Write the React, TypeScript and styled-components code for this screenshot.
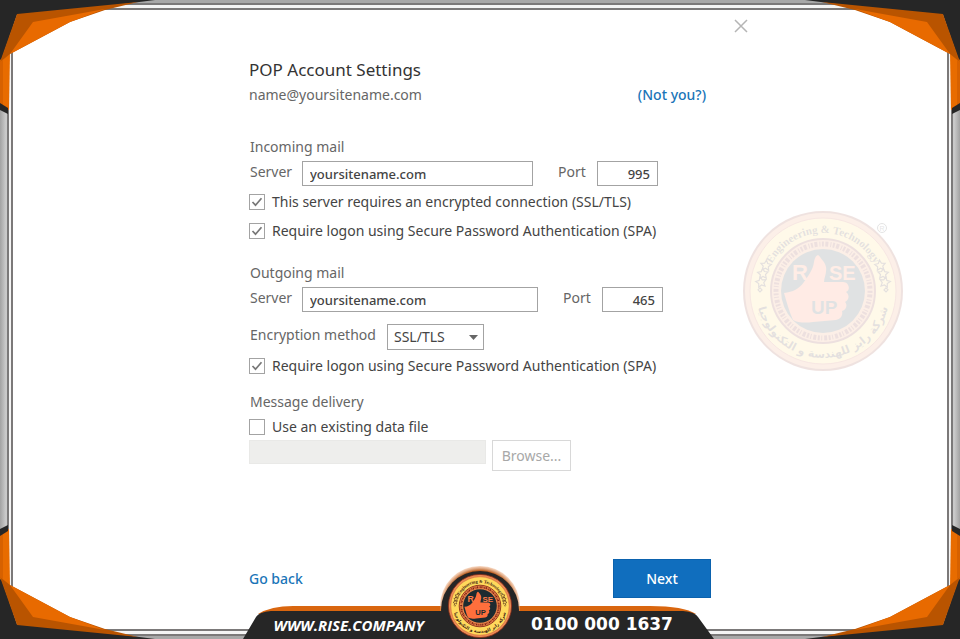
import React, { useId } from "react";
import styled, { createGlobalStyle, css } from "styled-components";

const GlobalStyle = createGlobalStyle`
  *, *::before, *::after { box-sizing: border-box; }
  body {
    margin: 0;
    background: #ffffff;
    font-family: "Noto Sans", "Open Sans", sans-serif;
    font-size: 14px;
    line-height: 20px;
    color: #444444;
  }
  input, select, button { font: inherit; color: inherit; }
`;

const Page = styled.div`
  position: relative;
  display: flex;
  min-height: 100vh;
  padding: 3px 7px;
  overflow: hidden;
  background: linear-gradient(90deg, #a2a2a2, #cccccc 6px, #a8a8a8 12px, #a8a8a8 calc(100% - 12px), #cccccc calc(100% - 6px), #a2a2a2);
`;

const OuterRule = styled.div`
  flex: 1;
  display: flex;
  border: 2px solid #7b7979;
  background: #f4f4f4;
  padding: 3px 2px;
`;

const Dialog = styled.main`
  flex: 1;
  display: flex;
  flex-direction: column;
  align-items: center;
  border: 2px solid #7b7979;
  background: #ffffff;
`;

const TitleBar = styled.div`
  display: flex;
  justify-content: flex-end;
  width: 100%;
  max-width: 536px;
  padding-top: 9px;
`;

const CloseButton = styled.button`
  display: flex;
  padding: 0;
  border: 0;
  background: none;
  color: #b5b5b5;
`;

const Form = styled.form`
  flex: 1;
  display: flex;
  flex-direction: column;
  width: 100%;
  max-width: 462px;
  padding: 25px 0 31px;
`;

const Heading = styled.h1`
  margin: 0;
  font-size: 17px;
  line-height: 24px;
  font-weight: 400;
  color: #333333;
`;

const AccountRow = styled.div`
  display: flex;
  justify-content: space-between;
  margin-top: 3px;
  padding-right: 5px;
  color: #666666;
`;

const TextLink = styled.a`
  color: #1a75b8;
  font-weight: 500;
  text-decoration: none;
`;

const Section = styled.fieldset<{ $gap: number }>`
  min-width: 0;
  margin: ${(p) => p.$gap}px 0 0;
  padding: 0;
  border: 0;
`;

const SectionTitle = styled.legend`
  padding: 0 0 0 1px;
  color: #666666;
`;

const FieldRow = styled.div<{ $gap?: number }>`
  display: flex;
  align-items: flex-start;
  margin-top: ${(p) => p.$gap ?? 4}px;
`;

const FieldLabel = styled.label<{ $width: number }>`
  flex: none;
  width: ${(p) => p.$width}px;
  padding: 1px 0 0 1px;
  color: #666666;
`;

const field = css`
  height: 25px;
  padding: 0 7px;
  border: 1px solid #a3a3a3;
  border-radius: 0;
  background: #ffffff;
  outline: none;
`;

const TextField = styled.input<{ $width: number }>`
  ${field}
  width: ${(p) => p.$width}px;
  font-size: 13px;
  font-weight: 500;
  &:disabled {
    height: 24px;
    border-color: #e9e9e7;
    background: #eeeeec;
  }
`;

const PortLabel = styled(FieldLabel)`
  margin-left: 24px;
`;

const PortField = styled.input`
  ${field}
  width: 61px;
  font-size: 13px;
  font-weight: 500;
  text-align: right;
`;

const SelectWrap = styled.span`
  display: grid;
  align-items: center;
  > * { grid-area: 1 / 1; }
  > svg { justify-self: end; margin-right: 6px; pointer-events: none; }
`;

const Select = styled.select`
  ${field}
  appearance: none;
  width: 97px;
  height: 26px;
  padding: 0 6px;
`;

const CheckLabel = styled.label<{ $gap: number }>`
  display: flex;
  align-items: center;
  gap: 7px;
  margin-top: ${(p) => p.$gap}px;
`;

const CheckBox = styled.span`
  display: grid;
  place-items: center;
  > * { grid-area: 1 / 1; }
  > svg { visibility: hidden; pointer-events: none; }
  > input:checked + svg { visibility: visible; }
`;

const CheckInput = styled.input`
  appearance: none;
  width: 16px;
  height: 16px;
  margin: 0;
  border: 1px solid #a3a3a3;
  background: #ffffff;
`;

const BrowseButton = styled.button`
  width: 79px;
  height: 31px;
  margin-left: 6px;
  padding: 0;
  border: 1px solid #d8d8d8;
  background: #ffffff;
  color: #a8a8a8;
`;

const Actions = styled.div`
  display: flex;
  align-items: center;
  justify-content: space-between;
  margin-top: auto;
`;

const NextButton = styled.button`
  width: 98px;
  height: 39px;
  border: 1px solid #0b62ae;
  background: #106ebe;
  color: #ffffff;
  font-weight: 500;
`;

const Corner = styled.svg<{ $right?: boolean; $bottom?: boolean }>`
  position: absolute;
  ${(p) => (p.$right ? "right: 0;" : "left: 0;")}
  ${(p) => (p.$bottom ? "bottom: 0;" : "top: 0;")}
  transform: scale(${(p) => (p.$right ? -1 : 1)}, ${(p) => (p.$bottom ? -1 : 1)});
  pointer-events: none;
`;

const Watermark = styled.div`
  position: absolute;
  right: 57px;
  top: 211px;
  opacity: 0.13;
  pointer-events: none;
`;

const Banner = styled.footer`
  position: absolute;
  left: 0;
  right: 0;
  bottom: 0;
  display: grid;
  justify-content: center;
  align-items: end;
  pointer-events: none;
  > * { grid-area: 1 / 1; }
`;

const BannerContent = styled.div`
  display: grid;
  grid-template-columns: 1fr 80px 1fr;
  align-items: end;
  width: 474px;
  color: #ffffff;
`;

const Website = styled.span`
  justify-self: end;
  margin-right: 16px;
  padding-bottom: 4px;
  font: italic 700 15px/20px "Open Sans", sans-serif;
`;

const Phone = styled.span`
  margin-left: 11px;
  padding-bottom: 5px;
  font: 700 17px/20px "DejaVu Sans", sans-serif;
`;

const Emblem = styled.div`
  display: flex;
  justify-content: center;
  padding-bottom: 1px;
`;

function CornerArt({ right, bottom }: { right?: boolean; bottom?: boolean }) {
  return (
    <Corner $right={right} $bottom={bottom} width="160" height="120" viewBox="0 0 160 120" aria-hidden="true">
      <polygon points="0,0 155,0 100,7 17,15 0,64" fill="#262626" />
      <polygon points="0,60 10,52 9,110 0,105" fill="#e86c00" />
      <polygon points="0,62 3,60 3,106 0,105" fill="#d76100" />
      <polygon points="0,103 8,108 8,114 0,110" fill="#262626" />
      <polygon points="17,14 138,2 105,10 70,22 10,54 0,62" fill="#b95400" />
      <polygon points="10,54 33,22 105,9 70,22" fill="#e86a00" />
    </Corner>
  );
}

const STAR = "M80 12l1.600 3.300 3.600.5-2.600 2.500.6 3.600-3.200-1.700-3.200 1.700.6-3.600-2.600-2.500 3.600-.5z";
const DIAMOND = "M80 15l2 2-2 2-2-2z";

function Seal({ size, registered }: { size: number; registered?: boolean }) {
  const id = useId();
  return (
    <svg width={size} height={size} viewBox="0 0 160 160" overflow="visible" role="img" aria-label="Rise Up">
      <circle cx="80" cy="80" r="79" fill="#e98b55" stroke="#8a2c18" strokeWidth="2" />
      <circle cx="80" cy="80" r="73" fill="#ffd95c" stroke="#c4472c" strokeWidth="1" />
      <circle cx="80" cy="80" r="52" fill="#ee8a4c" stroke="#7c1d14" strokeWidth="2" />
      <circle cx="80" cy="80" r="47" fill="none" stroke="#7c1d14" strokeWidth="5" strokeDasharray="2 1.5 3 2 1 1.5" />
      <circle cx="80" cy="80" r="42" fill="#1d2b30" />
      <path id={`${id}t`} d="M22 80a58 58 0 0 1 116 0" fill="none" />
      <path id={`${id}b`} d="M13 80a67 67 0 0 0 134 0" fill="none" />
      <text fontFamily="Liberation Sans Narrow, Liberation Serif, serif" fontWeight="700" fontSize="11" fill="#3b1a10" textAnchor="middle">
        <textPath href={`#${id}t`} startOffset="50%">Engineering &amp; Technology</textPath>
      </text>
      <text fontFamily="DejaVu Sans, sans-serif" fontWeight="700" fontSize="11" fill="#3b1a10" textAnchor="middle" direction="rtl">
        <textPath href={`#${id}b`} startOffset="50%">شركة رايز للهندسة و التكنولوجيا</textPath>
      </text>
      {[-89, -82, -74, -66, 66, 74, 82, 89].map((angle) => (
        <path
          key={angle}
          transform={`rotate(${angle} 80 80)`}
          d={Math.abs(angle) === 89 ? DIAMOND : STAR}
          fill="none"
          stroke="#3b1a10"
          strokeWidth="1.200"
        />
      ))}
      <path
        d="M41 82c9-1 15-4 20-11 4-6 9-12 10-20 1-6 4-9 6-5 2 3 5 5 6 10 1 6-2 11-2 15h19c6 0 8 8 3 10 4 3 3 8-1 10 3 3 1 8-3 9 1 4-1 8-6 9l-23 2c-7 1-15 1-20-2-4-9-6-17-9-27z"
        fill="#ff6f3c"
      />
      <g fontFamily="Liberation Sans, sans-serif" fontWeight="700" fill="#ff7a45">
        <text x="49" y="69" fontSize="22">R</text>
        <text x="86" y="69" fontSize="20">SE</text>
      </g>
      <text x="68" y="103" fontFamily="Liberation Sans, sans-serif" fontWeight="700" fontSize="19" fill="#1d2b30">UP</text>
      {registered && (
        <g fill="none" stroke="#333333">
          <circle cx="139" cy="17" r="4.500" />
          <text x="136.500" y="20" fontFamily="Liberation Sans, sans-serif" fontSize="7" fill="#333333" stroke="none">R</text>
        </g>
      )}
    </svg>
  );
}

function Check({ id, label, gap, checked }: { id: string; label: string; gap: number; checked?: boolean }) {
  return (
    <CheckLabel htmlFor={id} $gap={gap}>
      <CheckBox>
        <CheckInput id={id} type="checkbox" defaultChecked={checked} />
        <svg width="16" height="16" viewBox="0 0 16 16" fill="none" stroke="#777777" strokeWidth="1.700" aria-hidden="true">
          <path d="M3.500 8l3 3.200 6-7" />
        </svg>
      </CheckBox>
      {label}
    </CheckLabel>
  );
}

function ServerRow({ name, port, width }: { name: string; port: string; width: number }) {
  return (
    <FieldRow>
      <FieldLabel htmlFor={`${name}-server`} $width={53}>Server</FieldLabel>
      <TextField id={`${name}-server`} defaultValue="yoursitename.com" $width={width} />
      <PortLabel htmlFor={`${name}-port`} $width={40}>Port</PortLabel>
      <PortField id={`${name}-port`} defaultValue={port} inputMode="numeric" />
    </FieldRow>
  );
}

export default function App() {
  return (
    <>
      <GlobalStyle />
      <Page>
        <OuterRule>
          <Dialog>
            <TitleBar>
              <CloseButton type="button" aria-label="Close">
                <svg width="14" height="14" viewBox="0 0 14 14" fill="none" stroke="currentColor" strokeWidth="1.500">
                  <path d="M1 1l12 12M13 1L1 13" />
                </svg>
              </CloseButton>
            </TitleBar>
            <Form onSubmit={(e) => e.preventDefault()}>
              <Heading>POP Account Settings</Heading>
              <AccountRow>
                <span>name@yoursitename.com</span>
                <TextLink href="#account">(Not you?)</TextLink>
              </AccountRow>
              <Section $gap={32}>
                <SectionTitle>Incoming mail</SectionTitle>
                <ServerRow name="incoming" port="995" width={231} />
                <Check id="incoming-ssl" gap={6} checked label="This server requires an encrypted connection (SSL/TLS)" />
                <Check id="incoming-spa" gap={9} checked label="Require logon using Secure Password Authentication (SPA)" />
              </Section>
              <Section $gap={22}>
                <SectionTitle>Outgoing mail</SectionTitle>
                <ServerRow name="outgoing" port="465" width={236} />
                <FieldRow $gap={12}>
                  <FieldLabel htmlFor="encryption" $width={138}>Encryption method</FieldLabel>
                  <SelectWrap>
                    <Select id="encryption" defaultValue="SSL/TLS">
                      <option>SSL/TLS</option>
                    </Select>
                    <svg width="9" height="5" viewBox="0 0 9 5" aria-hidden="true">
                      <path d="M0 0h9L4.500 5z" fill="#666666" />
                    </svg>
                  </SelectWrap>
                </FieldRow>
                <Check id="outgoing-spa" gap={6} checked label="Require logon using Secure Password Authentication (SPA)" />
              </Section>
              <Section $gap={16}>
                <SectionTitle>Message delivery</SectionTitle>
                <Check id="existing-file" gap={5} label="Use an existing data file" />
                <FieldRow $gap={3}>
                  <TextField disabled aria-label="Data file" $width={237} />
                  <BrowseButton type="button" disabled>Browse...</BrowseButton>
                </FieldRow>
              </Section>
              <Actions>
                <TextLink href="#back">Go back</TextLink>
                <NextButton type="submit">Next</NextButton>
              </Actions>
            </Form>
          </Dialog>
        </OuterRule>
        <CornerArt />
        <CornerArt right />
        <CornerArt bottom />
        <CornerArt right bottom />
        <Watermark>
          <Seal size={160} registered />
        </Watermark>
        <Banner>
          <svg width="474" height="76" viewBox="0 0 474 76" aria-hidden="true">
            <defs>
              <radialGradient id="glow">
                <stop offset="0.88" stopColor="#b75a1c" />
                <stop offset="1" stopColor="#f0b48a" stopOpacity="0.500" />
              </radialGradient>
            </defs>
            <path d="M15 51Q28 43 50 43H407Q441 43 453 51z" fill="#d9660f" />
            <circle cx="237" cy="43" r="40" fill="url(#glow)" />
            <circle cx="237" cy="47" r="39" fill="#262626" />
            <path d="M0 76L13 54Q16 49 28 48H440Q452 49 455 54L471 76z" fill="#262626" />
          </svg>
          <BannerContent>
            <Website>WWW.RISE.COMPANY</Website>
            <Emblem>
              <Seal size={64} />
            </Emblem>
            <Phone>0100 000 1637</Phone>
          </BannerContent>
        </Banner>
      </Page>
    </>
  );
}
